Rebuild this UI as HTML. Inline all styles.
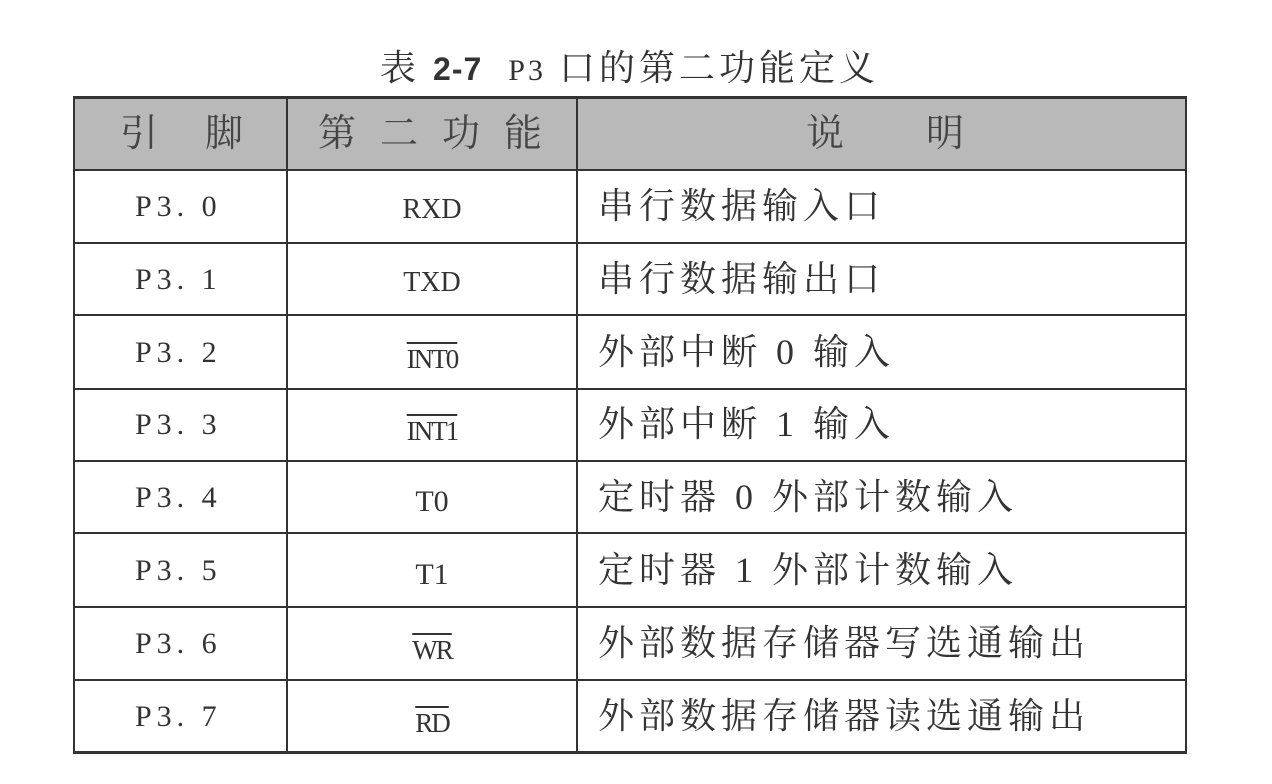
<!DOCTYPE html>
<html><head><meta charset="utf-8"><style>
body{margin:0;width:1272px;height:784px;background:#fff;position:relative;overflow:hidden;font-family:"Liberation Serif","Noto Serif CJK SC",serif;color:#333}
.t{position:absolute;white-space:nowrap;line-height:1}
.h{position:absolute;background:#333}
.c{font-size:30px;text-align:center}
.p{font-size:30px;left:135px;letter-spacing:5px}
.ov{text-decoration:overline;font-size:27px;letter-spacing:-2px}
.d{left:598px;font-size:36px;letter-spacing:5px}
</style></head><body>
<div class="t" style="left:380px;top:50px;font-size:36px;letter-spacing:4px">表 <b style="font-family:'Liberation Sans',sans-serif;font-size:32px;letter-spacing:1px">2-7</b>&nbsp;&nbsp;<span style="font-size:30px;letter-spacing:3px">P3</span> 口的第二功能定义</div>
<div style="position:absolute;left:74px;top:97px;width:1112px;height:73px;background:#b9b9b9"></div>
<div class="h" style="left:73px;top:96px;width:1114px;height:3px"></div>
<div class="h" style="left:73px;top:169px;width:1114px;height:2px"></div>
<div class="h" style="left:73px;top:242px;width:1114px;height:2px"></div>
<div class="h" style="left:73px;top:314px;width:1114px;height:2px"></div>
<div class="h" style="left:73px;top:388px;width:1114px;height:2px"></div>
<div class="h" style="left:73px;top:460px;width:1114px;height:2px"></div>
<div class="h" style="left:73px;top:532px;width:1114px;height:2px"></div>
<div class="h" style="left:73px;top:606px;width:1114px;height:2px"></div>
<div class="h" style="left:73px;top:679px;width:1114px;height:2px"></div>
<div class="h" style="left:73px;top:751px;width:1114px;height:3px"></div>
<div class="h" style="left:73px;top:97px;width:2px;height:656px"></div>
<div class="h" style="left:286px;top:97px;width:2px;height:656px"></div>
<div class="h" style="left:576px;top:97px;width:2px;height:656px"></div>
<div class="h" style="left:1185px;top:97px;width:2px;height:656px"></div>
<div class="t" style="left:120px;top:115px;font-size:38px;color:#444;letter-spacing:47px">引脚</div>
<div class="t" style="left:318px;top:115px;font-size:38px;color:#444;letter-spacing:24px">第二功能</div>
<div class="t" style="left:806px;top:115px;font-size:38px;color:#444;letter-spacing:82px">说明</div>
<div class="t p" style="top:192px">P3. 0</div>
<div class="t p" style="top:265px">P3. 1</div>
<div class="t p" style="top:338px">P3. 2</div>
<div class="t p" style="top:410px">P3. 3</div>
<div class="t p" style="top:483px">P3. 4</div>
<div class="t p" style="top:556px">P3. 5</div>
<div class="t p" style="top:629px">P3. 6</div>
<div class="t p" style="top:702px">P3. 7</div>
<div class="t c" style="left:288px;width:288px;top:196px;font-size:28px">RXD</div>
<div class="t c" style="left:288px;width:288px;top:269px;font-size:28px">TXD</div>
<div class="t c" style="left:288px;width:288px;top:344px"><span class="ov">INT0</span></div>
<div class="t c" style="left:288px;width:288px;top:416px"><span class="ov">INT1</span></div>
<div class="t c" style="left:288px;width:288px;top:487px;font-size:30px">T0</div>
<div class="t c" style="left:288px;width:288px;top:560px;font-size:30px">T1</div>
<div class="t c" style="left:288px;width:288px;top:635px"><span class="ov">WR</span></div>
<div class="t c" style="left:288px;width:288px;top:708px"><span class="ov">RD</span></div>
<div class="t d" style="top:188px">串行数据输入口</div>
<div class="t d" style="top:261px">串行数据输出口</div>
<div class="t d" style="top:334px">外部中断 0 输入</div>
<div class="t d" style="top:406px">外部中断 1 输入</div>
<div class="t d" style="top:479px">定时器 0 外部计数输入</div>
<div class="t d" style="top:552px">定时器 1 外部计数输入</div>
<div class="t d" style="top:625px">外部数据存储器写选通输出</div>
<div class="t d" style="top:698px">外部数据存储器读选通输出</div>
</body></html>
